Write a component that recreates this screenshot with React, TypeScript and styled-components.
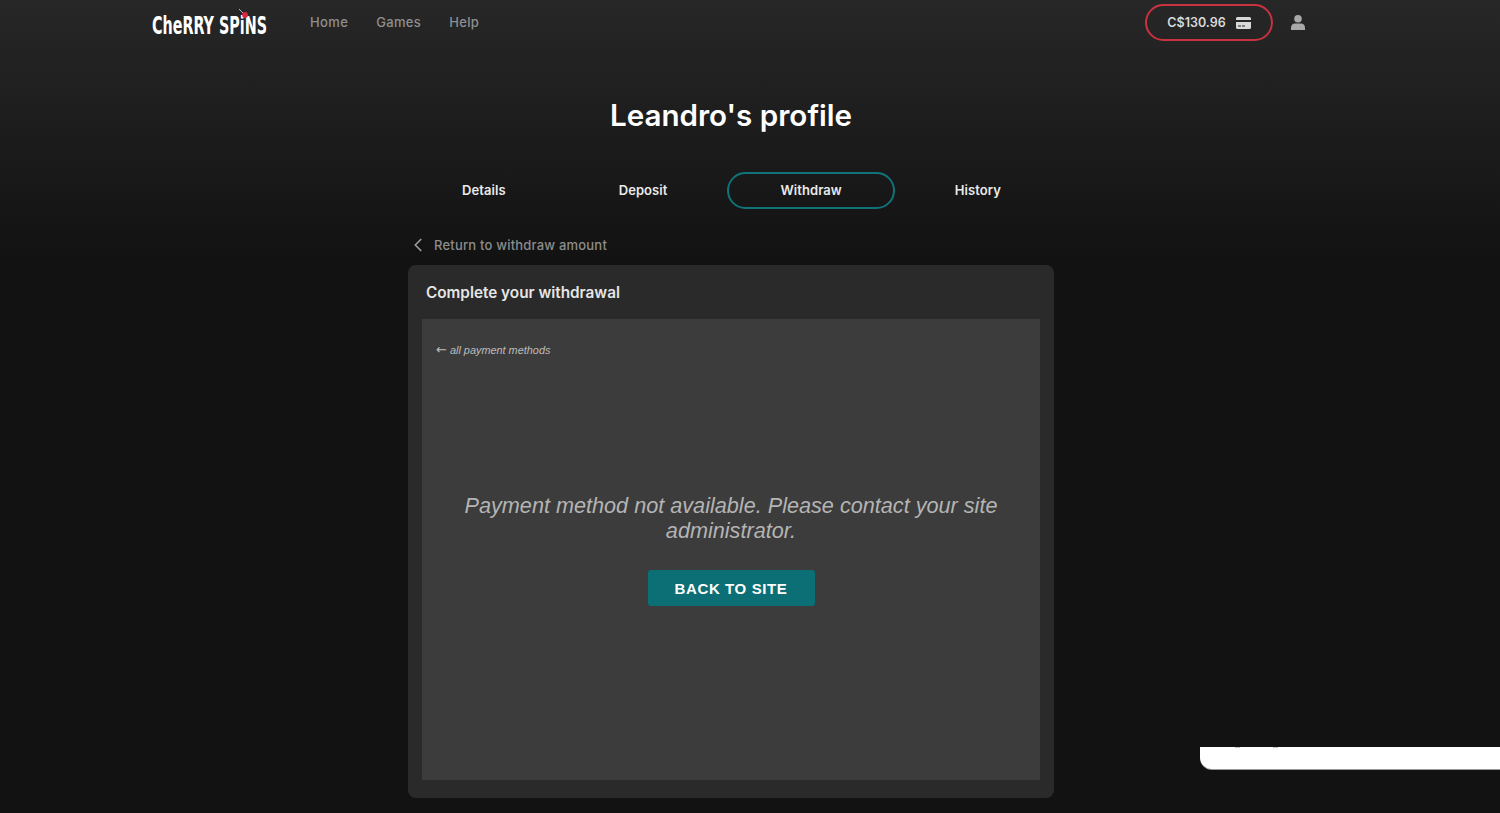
import React from 'react';
import styled, { createGlobalStyle } from 'styled-components';
import { ChevronLeft } from 'lucide-react';

const GlobalStyle = createGlobalStyle`
  html, body {
    margin: 0;
    height: 100%;
    background: #121212;
  }
  body {
    font-family: Inter, "Open Sans", sans-serif;
    overflow: hidden;
  }
`;

const Page = styled.div`
  width: 1500px;
  height: 813px;
  box-sizing: border-box;
  padding-right: 38px;
  overflow: hidden;
  background: linear-gradient(180deg, #272727 0, #121212 260px);
`;

const Header = styled.header`
  width: 1156px;
  height: 45px;
  margin: 0 auto;
  padding-right: 4px;
  box-sizing: border-box;
  display: flex;
  align-items: center;
`;

const Logo = styled.svg`
  display: block;
  width: 118px;
  height: 32px;
  margin: -2px 0 0 -1px;
  overflow: visible;
`;

const Nav = styled.nav`
  display: flex;
  gap: 28px;
  margin: -2px 0 0 40px;
`;

const NavLink = styled.a`
  font-size: 13px;
  font-weight: 500;
  letter-spacing: 0.35px;
  color: #8f8f8f;
`;

const HeaderRight = styled.div`
  margin-left: auto;
  display: flex;
  align-items: center;
  gap: 18px;
`;

const Balance = styled.div`
  box-sizing: border-box;
  width: 128px;
  height: 37px;
  display: flex;
  align-items: center;
  justify-content: center;
  gap: 10px;
  border: 2px solid #c9323f;
  border-radius: 19px;
  font-size: 12.5px;
  font-weight: 600;
  color: #d8d8d8;
`;

const Main = styled.main`
  width: 646px;
  margin: 0 auto;
`;

const Title = styled.h1`
  margin: 50px 0 0;
  font-size: 29.6px;
  line-height: 40px;
  font-weight: 600;
  text-align: center;
  color: #fff;
`;

const Tabs = styled.div`
  display: flex;
  justify-content: space-between;
  margin-top: 37px;
  padding-left: 1px;
`;

const Tab = styled.div<{ $active?: boolean }>`
  box-sizing: border-box;
  height: 37px;
  padding: 0 51px 2px;
  display: flex;
  align-items: center;
  border: 2px solid ${props => (props.$active ? '#10737a' : 'transparent')};
  border-radius: 19px;
  font-size: 13px;
  font-weight: 600;
  letter-spacing: 0.08px;
  color: #eaeaea;
`;

const BackRow = styled.div`
  display: flex;
  align-items: center;
  gap: 5px;
  height: 20px;
  margin-top: 26px;
  font-size: 13px;
  font-weight: 500;
  letter-spacing: 0.2px;
  color: #8c8c8c;
`;

const BackChevron = styled(ChevronLeft)`
  flex: none;
  margin-left: -1px;
  color: #a0a0a0;
`;

const Card = styled.section`
  margin-top: 10px;
  padding: 0 14px 18px;
  border-radius: 8px;
  background: #2a2a2a;
`;

const CardTitle = styled.h2`
  margin: 0;
  padding-left: 4px;
  height: 54px;
  display: flex;
  align-items: center;
  font-size: 15.3px;
  font-weight: 600;
  color: #e6e6e6;
`;

const Panel = styled.div`
  height: 461px;
  box-sizing: border-box;
  padding: 25px 14px 0;
  background: #3c3c3c;
  font-family: "Liberation Sans", Arial, sans-serif;
`;

const AllMethods = styled.a`
  display: flex;
  align-items: center;
  gap: 3px;
  height: 12px;
  font-size: 10.9px;
  font-style: italic;
  color: #bdbdbd;
`;

const Arrow = styled.span`
  font-family: "DejaVu Sans", sans-serif;
  font-size: 13px;
  font-style: normal;
  line-height: 12px;
`;

const Message = styled.p`
  margin: 137px 0 0;
  font-size: 21.65px;
  line-height: 25px;
  font-style: italic;
  text-align: center;
  color: #b4b4b4;
`;

const BackButton = styled.button`
  display: block;
  width: 167px;
  height: 36px;
  margin: 27px auto 0;
  padding: 0;
  border: 0;
  border-radius: 3px;
  background: #0c6f75;
  color: #fff;
  font-family: inherit;
  font-size: 15px;
  font-weight: 700;
  letter-spacing: 0.6px;
`;

const Widget = styled.div`
  position: fixed;
  left: 1200px;
  right: 0;
  top: 747px;
  height: 22px;
  background: #fff;
  border-bottom-left-radius: 12px;
  box-shadow: 0 1px 0 #9a9a9a;

  &::before,
  &::after {
    content: '';
    position: absolute;
    top: 0;
    width: 5px;
    height: 1px;
    background: #c4c4c4;
  }
  &::before {
    left: 35px;
  }
  &::after {
    left: 73px;
  }
`;

const CardIcon = () => (
  <svg width="15" height="12" viewBox="0 0 15 12">
    <path
      d="M1.5 0h12A1.5 1.5 0 0 1 15 1.5V3H0V1.5A1.5 1.5 0 0 1 1.5 0zM0 5h15v5.5a1.5 1.5 0 0 1-1.5 1.5h-12A1.5 1.5 0 0 1 0 10.5zm6 3.5v1h3v-1zm-4 0v1h3v-1z"
      fill="#d8d8d8"
      fillRule="evenodd"
    />
  </svg>
);

const UserIcon = () => (
  <svg width="14" height="15" viewBox="0 0 14 15">
    <circle cx="7" cy="3.8" r="3.8" fill="#a8a8a8" />
    <path d="M0 15v-2.4C0 10 2 8.6 4 8.6h6c2 0 4 1.4 4 4V15z" fill="#a8a8a8" />
  </svg>
);

const BrandLogo = () => (
  <Logo viewBox="0 0 118 32">
    <text
      x="0"
      y="27.5"
      fill="#fff"
      fontFamily="'DejaVu Sans Condensed', 'DejaVu Sans', sans-serif"
      fontWeight="700"
      fontSize="25"
      textLength="115"
      lengthAdjust="spacingAndGlyphs"
    >
      CheRRY SPiNS
    </text>
    <path d="M93 9 L87 3" stroke="#ddd" strokeWidth="0.8" fill="none" />
    <circle cx="93" cy="9" r="2.9" fill="#d8293a" />
  </Logo>
);

const tabs = ['Details', 'Deposit', 'Withdraw', 'History'];

export default function App() {
  return (
    <Page>
      <GlobalStyle />
      <Header>
        <BrandLogo />
        <Nav>
          <NavLink>Home</NavLink>
          <NavLink>Games</NavLink>
          <NavLink>Help</NavLink>
        </Nav>
        <HeaderRight>
          <Balance>
            C$130.96
            <CardIcon />
          </Balance>
          <UserIcon />
        </HeaderRight>
      </Header>
      <Main>
        <Title>Leandro's profile</Title>
        <Tabs>
          {tabs.map(tab => (
            <Tab key={tab} $active={tab === 'Withdraw'}>
              {tab}
            </Tab>
          ))}
        </Tabs>
        <BackRow>
          <BackChevron size={22} strokeWidth={1.8} />
          Return to withdraw amount
        </BackRow>
        <Card>
          <CardTitle>Complete your withdrawal</CardTitle>
          <Panel>
            <AllMethods>
              <Arrow>←</Arrow>
              all payment methods
            </AllMethods>
            <Message>
              Payment method not available. Please contact your site administrator.
            </Message>
            <BackButton>BACK TO SITE</BackButton>
          </Panel>
        </Card>
      </Main>
      <Widget />
    </Page>
  );
}
